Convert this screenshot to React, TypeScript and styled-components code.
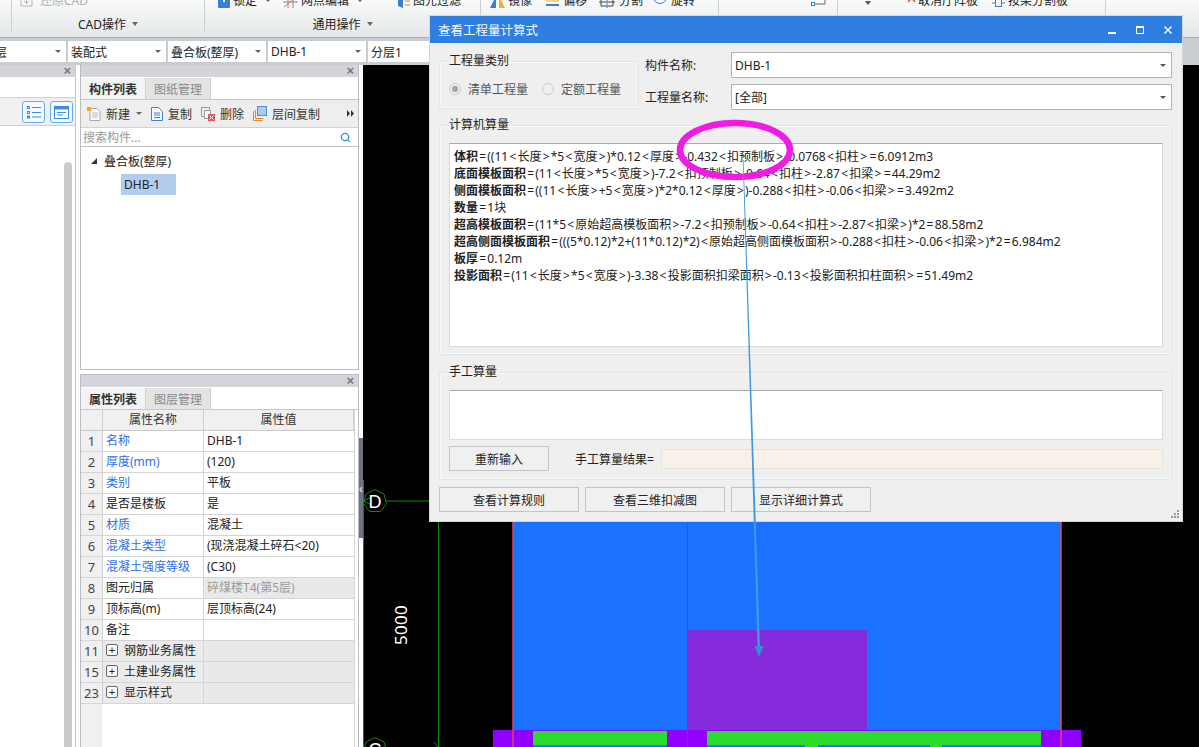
import React from 'react'
import styled, { createGlobalStyle } from 'styled-components'
import { Search } from 'lucide-react'

const FONT = '"Noto Sans", "Noto Sans CJK SC", sans-serif'

const GlobalStyle = createGlobalStyle`
  html, body {
    margin: 0;
    padding: 0;
    background: #fff;
    overflow: hidden;
  }
  * {
    box-sizing: border-box;
  }
`

const RIBBON_GROUPS = [
  { width: 12, items: [], label: '' },
  {
    width: 193,
    label: 'CAD操作',
    items: [{ ml: 8, icon: 'restore', text: '还原CAD', gap: 7, muted: true }],
  },
  {
    width: 276,
    label: '通用操作',
    items: [
      { ml: 13, icon: 'lock', text: '锁定', gap: 3, caret: true },
      { ml: 12, icon: 'axis', text: '网点编辑', gap: 3, caret: true },
      { ml: 35, icon: 'filter', text: '图元过滤', gap: 3 },
    ],
  },
  {
    width: 238,
    label: '',
    items: [
      { ml: 9, icon: 'mirror', text: '镜像', gap: 3 },
      { ml: 13, icon: 'offset', text: '偏移', gap: 3 },
      { ml: 12, icon: 'split', text: '分割', gap: 4 },
      { ml: 10, icon: 'rotate', text: '旋转', gap: 4 },
    ],
  },
  {
    width: 119,
    label: '',
    items: [{ ml: 92, icon: 'corner', text: '', gap: 0 }],
  },
  {
    width: 268,
    label: '',
    items: [
      { ml: 26, icon: 'caret', text: '', gap: 0 },
      { ml: 30, icon: 'cancel', text: '取消厅阵板', gap: 2 },
      { ml: 14, icon: 'beam', text: '按梁分割板', gap: 3 },
    ],
  },
]

const SELECTORS = [
  { width: 66, text: '层', clipped: true },
  { width: 98, text: '装配式' },
  { width: 98, text: '叠合板(整厚)' },
  { width: 98, text: 'DHB-1' },
  { width: 200, text: '分层1', noCaret: true },
]

type Prop = {
  no: number
  name: string
  value?: string
  link?: boolean
  muted?: boolean
  group?: boolean
}

const PROPS: Prop[] = [
  { no: 1, name: '名称', value: 'DHB-1', link: true },
  { no: 2, name: '厚度(mm)', value: '(120)', link: true },
  { no: 3, name: '类别', value: '平板', link: true },
  { no: 4, name: '是否是楼板', value: '是' },
  { no: 5, name: '材质', value: '混凝土', link: true },
  { no: 6, name: '混凝土类型', value: '(现浇混凝土碎石<20)', link: true },
  { no: 7, name: '混凝土强度等级', value: '(C30)', link: true },
  { no: 8, name: '图元归属', value: '碎煤楼T4(第5层)', muted: true },
  { no: 9, name: '顶标高(m)', value: '层顶标高(24)' },
  { no: 10, name: '备注', value: '' },
  { no: 11, name: '钢筋业务属性', group: true },
  { no: 15, name: '土建业务属性', group: true },
  { no: 23, name: '显示样式', group: true },
]

const FORMULAS = [
  ['体积', '=((11<长度>*5<宽度>)*0.12<厚度>-0.432<扣预制板>-0.0768<扣柱>=6.0912m3'],
  ['底面模板面积', '=(11<长度>*5<宽度>)-7.2<扣预制板>-0.64<扣柱>-2.87<扣梁>=44.29m2'],
  ['侧面模板面积', '=((11<长度>+5<宽度>)*2*0.12<厚度>)-0.288<扣柱>-0.06<扣梁>=3.492m2'],
  ['数量', '=1块'],
  ['超高模板面积', '=(11*5<原始超高模板面积>-7.2<扣预制板>-0.64<扣柱>-2.87<扣梁>)*2=88.58m2'],
  ['超高侧面模板面积', '=(((5*0.12)*2+(11*0.12)*2)<原始超高侧面模板面积>-0.288<扣柱>-0.06<扣梁>)*2=6.984m2'],
  ['板厚', '=0.12m'],
  ['投影面积', '=(11<长度>*5<宽度>)-3.38<投影面积扣梁面积>-0.13<投影面积扣柱面积>=51.49m2'],
]

const RibbonIcon = ({ name }: { name: string }) => {
  switch (name) {
    case 'restore':
      return (
        <svg width="13" height="14" viewBox="0 0 13 14" fill="none" stroke="#b5b5b5">
          <path d="M1 5v7h11V5M6.5 2v7M4 7l2.5 2.5L9 7" />
        </svg>
      )
    case 'lock':
      return (
        <svg width="12" height="14" viewBox="0 0 12 14">
          <rect x="0" y="0" width="12" height="14" rx="1" fill="#3a7fd0" />
          <rect x="5" y="3" width="2" height="5" fill="#fff" />
        </svg>
      )
    case 'axis':
      return (
        <svg width="15" height="14" viewBox="0 0 15 14" fill="none">
          <path d="M1 13L14 2M5 0v14M10 0v14" stroke="#c87a50" />
          <path d="M0 8h15" stroke="#7a8a9a" />
        </svg>
      )
    case 'filter':
      return (
        <svg width="12" height="14" viewBox="0 0 12 14">
          <path d="M0 2l5-2v14l-5-2z" fill="#3a7fd0" />
          <path d="M7 7h5M7 11h5" stroke="#e08030" />
        </svg>
      )
    case 'mirror':
      return (
        <svg width="15" height="14" viewBox="0 0 15 14">
          <path d="M0 14L6 2v12z" fill="#3a7fd0" />
          <path d="M15 14L9 2v12z" fill="#f0b030" />
        </svg>
      )
    case 'offset':
      return (
        <svg width="15" height="14" viewBox="0 0 15 14" fill="none">
          <rect x="1" y="-4" width="13" height="11" rx="2" stroke="#f0b030" />
          <path d="M1 11h13" stroke="#3a7fd0" strokeWidth="2" />
        </svg>
      )
    case 'split':
      return (
        <svg width="16" height="14" viewBox="0 0 16 14" fill="none" stroke="#444">
          <path d="M2 0v12h12V0M0 8h16" />
          <path d="M8 0v14" stroke="#3a7fd0" strokeDasharray="2 1" />
        </svg>
      )
    case 'rotate':
      return (
        <svg width="14" height="14" viewBox="0 0 14 14" fill="none">
          <circle cx="7" cy="3" r="6.5" stroke="#3a7fd0" />
        </svg>
      )
    case 'corner':
      return (
        <svg width="15" height="14" viewBox="0 0 15 14" fill="none">
          <path d="M14 0v10H3" stroke="#666" />
          <rect x="0.5" y="8.5" width="3" height="3" stroke="#3a7fd0" fill="#fff" />
        </svg>
      )
    case 'caret':
      return (
        <svg width="8" height="7" viewBox="0 0 8 7" fill="#555">
          <path d="M1 0h6L4 4z" />
        </svg>
      )
    case 'cancel':
      return (
        <svg width="14" height="14" viewBox="0 0 14 14" fill="none">
          <path d="M0 2h5M0 2v4" stroke="#3a7fd0" />
          <path d="M6 0l7 8M13 0L6 8" stroke="#e05a40" strokeWidth="1.6" />
        </svg>
      )
    case 'beam':
      return (
        <svg width="13" height="14" viewBox="0 0 13 14" fill="none">
          <rect x="3.5" y="0.5" width="6" height="12" stroke="#3a7fd0" />
          <path d="M0 3h3M0 9h3M10 3h3M10 9h3" stroke="#3a7fd0" />
        </svg>
      )
    default:
      return null
  }
}

const ToolIcon = ({ name }: { name: string }) => {
  switch (name) {
    case 'new':
      return (
        <svg width="14" height="14" viewBox="0 0 14 14" fill="none">
          <path d="M3 1.5h7l3 3v9H3z" fill="#fafafa" stroke="#a8a8a8" />
          <path d="M5 6h6M5 8h6M5 10h6" stroke="#bdbdbd" />
          <rect x="0" y="0" width="4" height="4" fill="#f5a623" />
        </svg>
      )
    case 'copy':
      return (
        <svg width="12" height="14" viewBox="0 0 12 14" fill="none">
          <path d="M0.5 0.5h7l4 4v9h-11z" fill="#f4f9ff" stroke="#3a86d8" />
          <path d="M3 6h6M3 8h6M3 10.5h6" stroke="#3a86d8" />
        </svg>
      )
    case 'delete':
      return (
        <svg width="14" height="14" viewBox="0 0 14 14" fill="none">
          <path d="M0.5 0.5h8v9h-8z" stroke="#9a9a9a" />
          <path d="M3.5 3.5h6v8h-6z" fill="#f6f6f6" stroke="#9a9a9a" />
          <rect x="7" y="7" width="7" height="7" fill="#e25555" />
          <path d="M8.5 8.5l4 4M12.5 8.5l-4 4" stroke="#fff" />
        </svg>
      )
    case 'floor':
      return (
        <svg width="14" height="15" viewBox="0 0 14 15" fill="none">
          <path d="M0.5 5v9.5h9M2.5 4v8.5h8" stroke="#e8832e" />
          <rect x="4.5" y="0.5" width="9" height="9" fill="#a9cdf2" stroke="#4a90d9" />
        </svg>
      )
    case 'list':
      return (
        <svg width="14" height="14" viewBox="0 0 14 14" fill="none" stroke="#3a8ee0">
          <rect x="0.5" y="1.5" width="2" height="2" />
          <rect x="0.5" y="6.5" width="2" height="2" />
          <rect x="0.5" y="11" width="2" height="2" />
          <path d="M5 2.5h9M5 7.5h9M5 12h9" />
        </svg>
      )
    case 'window':
      return (
        <svg width="15" height="13" viewBox="0 0 15 13">
          <rect x="0.5" y="0.5" width="14" height="12" fill="#fff" stroke="#3a8ee0" />
          <rect x="0.5" y="0.5" width="14" height="3" fill="#3a8ee0" />
          <path d="M3 6.5h9M3 9h6" stroke="#3a8ee0" />
        </svg>
      )
    default:
      return null
  }
}

const CanvasDrawing = () => (
  <svg width="836" height="682" viewBox="363 65 836 682">
    <rect x="513" y="500" width="548" height="247" fill="#1b72ff" />
    <rect x="687" y="630" width="180" height="100" fill="#852bdb" />
    <rect x="493" y="730" width="588" height="17" fill="#8f00ff" />
    <rect x="533" y="731" width="134" height="14" fill="#2bdc2b" />
    <rect x="707" y="731" width="334" height="14" fill="#2bdc2b" />
    <rect x="533" y="745" width="134" height="2" fill="#1b72ff" />
    <rect x="707" y="745" width="334" height="2" fill="#1b72ff" />
    <rect x="805" y="745" width="13" height="2" fill="#2bdc2b" />
    <rect x="930" y="745" width="12" height="2" fill="#2bdc2b" />
    <path d="M513 500v247M1061 500v247" stroke="#e0446a" strokeWidth="1.5" />
    <path d="M687.5 500v247" stroke="#f0142e" />
    <path d="M363.5 480v267M438.5 500v247M363 501h80" stroke="#0a8a0a" />
    <path d="M438 747l-4-5" stroke="#0a8a0a" />
    <polygon
      points="375,489.5 384,494 386.5,503.5 380.5,511.5 369.5,511.5 363.5,503.5 366,494"
      fill="#000"
      stroke="#0a8a0a"
    />
    <path d="M363.5 501l8 4M363.5 501l8-4" stroke="#0a8a0a" />
    <polygon points="375,737.5 384,742 386.5,751 363.5,751 366,742" fill="#000" stroke="#0a8a0a" />
    <Bubble x="375" y="508">D</Bubble>
    <Bubble x="375" y="756">C</Bubble>
    <Dim transform="translate(407 625) rotate(-90)" textAnchor="middle">
      5000
    </Dim>
  </svg>
)

// the source app's font gives < > = more room than Noto Sans does
const spaced = (text: string) =>
  text.split(/([<>=])/).map((part, i) => (i % 2 ? <Operator key={i}>{part}</Operator> : part))

const App = () => {
  return (
    <Page>
      <GlobalStyle />
      <Ribbon>
        {RIBBON_GROUPS.map((group, i) => (
          <RibbonGroup key={i} $width={group.width}>
            <RibbonRow>
              {group.items.map((item) => (
                <RibbonItem key={item.icon} $ml={item.ml} $gap={item.gap} $muted={item.muted}>
                  <RibbonIcon name={item.icon} />
                  {item.text}
                  {item.caret && <RibbonCaret />}
                </RibbonItem>
              ))}
            </RibbonRow>
            {group.label && (
              <RibbonLabel>
                {group.label}
                <LabelCaret />
              </RibbonLabel>
            )}
          </RibbonGroup>
        ))}
      </Ribbon>

      <SelectorBar>
        {SELECTORS.map((s) => (
          <SelectorCell key={s.text} $width={s.width} $clipped={s.clipped}>
            <span>{s.text}</span>
            {!s.noCaret && <SmallCaret />}
          </SelectorCell>
        ))}
      </SelectorBar>

      <Workspace>
        <LeftPanel>
          <PanelHeader>
            <CloseMark>×</CloseMark>
          </PanelHeader>
          <LeftTabs />
          <ViewButtons>
            <ViewButton>
              <ToolIcon name="list" />
            </ViewButton>
            <ViewButton>
              <ToolIcon name="window" />
            </ViewButton>
          </ViewButtons>
          <ScrollArea>
            <ScrollThumb />
          </ScrollArea>
        </LeftPanel>

        <MiddleColumn>
          <ListPanel>
            <PanelHeader>
              <CloseMark>×</CloseMark>
            </PanelHeader>
            <Tabs>
              <Tab $active>构件列表</Tab>
              <Tab>图纸管理</Tab>
            </Tabs>
            <Toolbar>
              <ToolButton $ml={6}>
                <ToolIcon name="new" />
                新建
                <ToolCaret />
              </ToolButton>
              <ToolButton $ml={9}>
                <ToolIcon name="copy" />
                复制
              </ToolButton>
              <ToolButton $ml={9}>
                <ToolIcon name="delete" />
                删除
              </ToolButton>
              <ToolButton $ml={9}>
                <ToolIcon name="floor" />
                层间复制
              </ToolButton>
              <MoreMark>
                <svg width="7" height="7" viewBox="0 0 7 7" fill="#333">
                  <path d="M0 0l3 3.5L0 7zM4 0l3 3.5L4 7z" />
                </svg>
              </MoreMark>
            </Toolbar>
            <SearchRow>
              搜索构件...
              <Search size={11} color="#3d93d2" strokeWidth={3} />
            </SearchRow>
            <TreeRoot>
              <svg width="6" height="6" viewBox="0 0 6 6" fill="#333">
                <path d="M6 0v6H0z" />
              </svg>
              叠合板(整厚)
            </TreeRoot>
            <TreeLeaf>DHB-1</TreeLeaf>
          </ListPanel>

          <PropertyPanel>
            <PanelHeader>
              <CloseMark>×</CloseMark>
            </PanelHeader>
            <Tabs>
              <Tab $active>属性列表</Tab>
              <Tab>图层管理</Tab>
            </Tabs>
            <PropTable>
              <HeadRow>
                <IndexCell />
                <HeadCell>属性名称</HeadCell>
                <HeadCell>属性值</HeadCell>
              </HeadRow>
              {PROPS.map((p) => (
                <PropRow key={p.no}>
                  <IndexCell>{p.no}</IndexCell>
                  <NameCell $link={p.link} $group={p.group}>
                    {p.group && <Expander>+</Expander>}
                    {p.name}
                  </NameCell>
                  <ValueCell $muted={p.muted} $group={p.group}>
                    {p.value}
                  </ValueCell>
                </PropRow>
              ))}
              <TableRest />
            </PropTable>
          </PropertyPanel>
        </MiddleColumn>

        <Splitter>
          <SplitterBar>‹</SplitterBar>
        </Splitter>

        <Canvas>
          <CanvasDrawing />
        </Canvas>
      </Workspace>

      <Dialog>
        <TitleBar>
          查看工程量计算式
          <WindowButtons>
            <svg width="10" height="10" viewBox="0 0 10 10" fill="none" stroke="#fff">
              <path d="M1 8h8" strokeWidth="2" />
            </svg>
            <svg width="10" height="10" viewBox="0 0 10 10" fill="none" stroke="#fff">
              <rect x="1.5" y="1.5" width="7" height="7" />
              <path d="M1 2h8" strokeWidth="2" />
            </svg>
            <svg width="10" height="10" viewBox="0 0 10 10" fill="none" stroke="#fff" strokeWidth="1.4">
              <path d="M1.5 1.5l7 7M8.5 1.5l-7 7" />
            </svg>
          </WindowButtons>
        </TitleBar>
        <DialogBody>
          <TopSection>
            <TypeGroup>
              <GroupTitle>工程量类别</GroupTitle>
              <RadioRow>
                <RadioItem>
                  <RadioMark $checked />
                  清单工程量
                </RadioItem>
                <RadioItem>
                  <RadioMark />
                  定额工程量
                </RadioItem>
              </RadioRow>
            </TypeGroup>
            <FieldColumn>
              <FieldRow>
                <FieldLabel>构件名称:</FieldLabel>
                <SelectBox>
                  DHB-1
                  <SelectCaret />
                </SelectBox>
              </FieldRow>
              <FieldRow>
                <FieldLabel>工程量名称:</FieldLabel>
                <SelectBox>
                  [全部]
                  <SelectCaret />
                </SelectBox>
              </FieldRow>
            </FieldColumn>
          </TopSection>

          <ComputedGroup>
            <GroupTitle>计算机算量</GroupTitle>
            <FormulaBox>
              {FORMULAS.map(([label, body]) => (
                <FormulaLine key={label}>
                  <b>{label}</b>
                  {spaced(body)}
                </FormulaLine>
              ))}
            </FormulaBox>
          </ComputedGroup>

          <ManualGroup>
            <GroupTitle>手工算量</GroupTitle>
            <ManualBox />
            <ManualRow>
              <DialogButton $width={100}>重新输入</DialogButton>
              <ResultLabel>手工算量结果=</ResultLabel>
              <ResultField />
            </ManualRow>
          </ManualGroup>

          <ButtonRow>
            <DialogButton $width={140}>查看计算规则</DialogButton>
            <DialogButton $width={140}>查看三维扣减图</DialogButton>
            <DialogButton $width={140}>显示详细计算式</DialogButton>
          </ButtonRow>
        </DialogBody>
        <ResizeGrip>
          <svg width="10" height="10" viewBox="0 0 10 10" fill="#999">
            <rect x="7" y="1" width="2" height="2" />
            <rect x="4" y="4" width="2" height="2" />
            <rect x="7" y="4" width="2" height="2" />
            <rect x="1" y="7" width="2" height="2" />
            <rect x="4" y="7" width="2" height="2" />
            <rect x="7" y="7" width="2" height="2" />
          </svg>
        </ResizeGrip>
      </Dialog>

      <Annotation width="1199" height="747" viewBox="0 0 1199 747">
        <ellipse cx="735" cy="150" rx="55" ry="27" fill="none" stroke="#f11be6" strokeWidth="6.5" />
        <polygon points="742.8,160 743.6,160 760,648 757.6,648" fill="#3d9be3" />
        <polygon points="754.5,646 763.5,646 759,657" fill="#2f8fdc" />
      </Annotation>
    </Page>
  )
}

export default App

const Page = styled.div`
  position: relative;
  display: flex;
  flex-direction: column;
  width: 1199px;
  height: 747px;
  overflow: hidden;
  font-family: ${FONT};
  font-size: 12px;
  color: #222;
  background: #c9ccd1;
`

const Ribbon = styled.div`
  display: flex;
  height: 38px;
  background: linear-gradient(#f9fafa, #e4e7e8);
  border-bottom: 1px solid #a9abae;
`

const RibbonGroup = styled.div<{ $width: number }>`
  flex: none;
  width: ${({ $width }) => $width}px;
  height: 33px;
  border-right: 1px solid #ccd0d3;
  overflow: hidden;
`

const RibbonRow = styled.div`
  display: flex;
  align-items: flex-end;
  height: 15px;
  margin-top: -7px;
`

const RibbonItem = styled.div<{ $ml: number; $gap: number; $muted?: boolean }>`
  display: flex;
  align-items: flex-end;
  gap: ${({ $gap }) => $gap}px;
  margin-left: ${({ $ml }) => $ml}px;
  line-height: 15px;
  color: ${({ $muted }) => ($muted ? '#b0b0b0' : '#222')};
  white-space: nowrap;
`

const RibbonLabel = styled.div`
  display: flex;
  align-items: center;
  justify-content: center;
  gap: 6px;
  height: 17px;
  margin-top: 7px;
`

const LabelCaret = styled.i`
  width: 0;
  height: 0;
  border-left: 3.5px solid transparent;
  border-right: 3.5px solid transparent;
  border-top: 4px solid #666;
`

const SmallCaret = styled.i`
  flex: none;
  width: 0;
  height: 0;
  border-left: 3px solid transparent;
  border-right: 3px solid transparent;
  border-top: 3px solid #666;
`

const RibbonCaret = styled(SmallCaret)`
  align-self: center;
  margin-left: 5px;
`

const SelectorBar = styled.div`
  display: flex;
  gap: 2px;
  height: 21px;
  margin-top: 3px;
`

const SelectorCell = styled.div<{ $width: number; $clipped?: boolean }>`
  display: flex;
  align-items: center;
  justify-content: space-between;
  flex: none;
  width: ${({ $width }) => $width}px;
  padding: 0 5px 0 ${({ $clipped }) => ($clipped ? 0 : 3)}px;
  background: #fff;
  overflow: hidden;
  span {
    margin-left: ${({ $clipped }) => ($clipped ? -5 : 0)}px;
  }
`

const Workspace = styled.div`
  display: flex;
  height: 682px;
  margin-top: 3px;
  background: #fff;
`

const LeftPanel = styled.div`
  display: flex;
  flex-direction: column;
  flex: none;
  width: 76px;
  border-right: 1px solid #c5c7ca;
`

const PanelHeader = styled.div`
  display: flex;
  align-items: center;
  justify-content: flex-end;
  flex: none;
  height: 12px;
  padding-right: 4px;
  background: #d3d5da;
`

const CloseMark = styled.span`
  font-family: 'Liberation Sans', sans-serif;
  font-size: 13px;
  font-weight: 700;
  line-height: 12px;
  color: #777;
`

const LeftTabs = styled.div`
  flex: none;
  height: 21px;
  border-bottom: 1px solid #cfd1d4;
`

const ViewButtons = styled.div`
  display: flex;
  justify-content: flex-end;
  gap: 5px;
  flex: none;
  height: 28px;
  padding: 3px 2px 0 0;
  background: #f0f0f0;
  border-bottom: 1px solid #d0d0d0;
`

const ViewButton = styled.div`
  display: flex;
  align-items: center;
  justify-content: center;
  width: 23px;
  height: 22px;
  background: #f6fbff;
  border: 1px solid #66adf0;
  border-radius: 3px;
`

const ScrollArea = styled.div`
  display: flex;
  flex: 1;
  padding: 36px 3px 0 64px;
`

const ScrollThumb = styled.div`
  width: 8px;
  background: #cbcbcb;
  border-radius: 4px 4px 0 0;
`

const MiddleColumn = styled.div`
  display: flex;
  flex-direction: column;
  gap: 4px;
  flex: none;
  width: 279px;
  margin-left: 4px;
`

const ListPanel = styled.div`
  display: flex;
  flex-direction: column;
  flex: none;
  height: 305px;
  border: solid #b9bcc2;
  border-width: 0 1px 1px;
`

const PropertyPanel = styled.div`
  display: flex;
  flex-direction: column;
  flex: 1;
  min-height: 0;
  border: solid #b9bcc2;
  border-width: 1px 1px 0;
`

const Tabs = styled.div`
  display: flex;
  flex: none;
  height: 23px;
  padding-top: 1px;
  border-bottom: 1px solid #c5c7ca;
`

const Tab = styled.div<{ $active?: boolean }>`
  display: flex;
  align-items: center;
  justify-content: center;
  width: 65px;
  font-weight: ${({ $active }) => ($active ? 700 : 400)};
  color: ${({ $active }) => ($active ? '#333' : '#8a8a8a')};
  background: ${({ $active }) => ($active ? '#f4f4f4' : '#e3e3e3')};
  border-right: 1px solid #cfd1d4;
`

const Toolbar = styled.div`
  display: flex;
  align-items: center;
  flex: none;
  height: 28px;
  background: #eeeeee;
  border-bottom: 1px solid #d0d2d6;
`

const ToolButton = styled.div<{ $ml: number }>`
  display: flex;
  align-items: center;
  gap: 5px;
  margin-left: ${({ $ml }) => $ml}px;
  color: #333;
`

const ToolCaret = styled(SmallCaret)`
  margin-left: 1px;
`

const MoreMark = styled.div`
  display: flex;
  margin-left: auto;
  padding-right: 4px;
`

const SearchRow = styled.div`
  display: flex;
  align-items: center;
  justify-content: space-between;
  flex: none;
  height: 19px;
  padding: 0 7px 0 2px;
  color: #9a9a9a;
  border-bottom: 1px solid #c0c3c9;
`

const TreeRoot = styled.div`
  display: flex;
  align-items: center;
  gap: 7px;
  height: 17px;
  margin-top: 5px;
  padding-left: 10px;
`

const TreeLeaf = styled.div`
  display: flex;
  align-items: center;
  width: 55px;
  height: 21px;
  margin: 5px 0 0 40px;
  padding-left: 3px;
  background: #b3cdee;
`

const PropTable = styled.div`
  display: flex;
  flex-direction: column;
  flex: 1;
  min-height: 0;
  margin-right: 3px;
  border-right: 1px solid #d5d5d5;
`

const HeadRow = styled.div`
  display: grid;
  grid-template-columns: 22px 101px 1fr;
  flex: none;
  height: 21px;
  background: #f0f0f0;
  border-bottom: 1px solid #c9c9c9;
`

const PropRow = styled.div`
  display: grid;
  grid-template-columns: 22px 101px 1fr;
  flex: none;
  height: 21px;
  border-bottom: 1px solid #d5d5d5;
`

const IndexCell = styled.div`
  display: flex;
  align-items: center;
  justify-content: center;
  padding-bottom: 1px;
  color: #444;
  font-size: 13px;
  background: #f0f0f0;
  border-right: 1px solid #cfcfcf;
`

const HeadCell = styled.div`
  display: flex;
  align-items: center;
  justify-content: center;
  padding-bottom: 2px;
  color: #333;
  border-right: 1px solid #cfcfcf;
`

const NameCell = styled.div<{ $link?: boolean; $group?: boolean }>`
  display: flex;
  align-items: center;
  gap: 6px;
  padding: 0 0 2px 3px;
  color: ${({ $link }) => ($link ? '#2f6fe8' : '#222')};
  background: ${({ $group }) => ($group ? '#ebebeb' : '#fff')};
  border-right: 1px solid #d5d5d5;
`

const ValueCell = styled.div<{ $muted?: boolean; $group?: boolean }>`
  display: flex;
  align-items: center;
  padding: 0 0 2px 3px;
  color: ${({ $muted }) => ($muted ? '#9a9a9a' : '#222')};
  background: ${({ $muted, $group }) => ($muted || $group ? '#e9e9e9' : '#fff')};
`

const Expander = styled.span`
  display: flex;
  align-items: center;
  justify-content: center;
  width: 12px;
  height: 12px;
  font-family: 'Liberation Sans', sans-serif;
  font-size: 11px;
  line-height: 1;
  background: #fafafa;
  border: 1px solid #666;
  border-radius: 2px;
`

const TableRest = styled.div`
  flex: 1;
  margin-right: 252px;
  background: linear-gradient(90deg, #f0f0f0 21px, #cfcfcf 21px, #cfcfcf 22px, #fff 22px);
`

const Splitter = styled.div`
  flex: none;
  width: 4px;
  padding-top: 373px;
  background: #fff;
`

const SplitterBar = styled.div`
  display: flex;
  align-items: center;
  justify-content: center;
  height: 100px;
  font-size: 12px;
  font-weight: 700;
  color: #c8ccd2;
  background: #6b7480;
`

const Canvas = styled.div`
  flex: 1;
  min-width: 0;
  background: #000;
  svg {
    display: block;
  }
`

const Bubble = styled.text`
  font-family: 'Liberation Sans', sans-serif;
  font-size: 18px;
  fill: #fff;
  text-anchor: middle;
`

const Dim = styled.text`
  font-family: ${FONT};
  font-size: 17px;
  letter-spacing: 0.3px;
  fill: #fff;
`

const Dialog = styled.div`
  position: absolute;
  top: 16px;
  left: 430px;
  display: flex;
  flex-direction: column;
  width: 752px;
  height: 505px;
  background: #efefef;
  box-shadow: 0 0 0 1px #d4d6da;
`

const TitleBar = styled.div`
  display: flex;
  align-items: center;
  justify-content: space-between;
  flex: none;
  height: 27px;
  padding: 0 9px 0 8px;
  font-size: 12.5px;
  color: #f3f8ff;
  background: #2e7fe0;
`

const WindowButtons = styled.div`
  display: flex;
  gap: 18px;
`

const DialogBody = styled.div`
  display: flex;
  flex-direction: column;
  flex: 1;
  padding: 9px 10px 0 9px;
`

const TopSection = styled.div`
  display: flex;
  flex: none;
`

const GroupBase = styled.fieldset`
  flex: none;
  min-width: 0;
  margin: 0;
  border: 1px solid #e4e4e4;
  box-shadow: inset 0 0 0 1px #f8f8f8;
`

const GroupTitle = styled.legend`
  padding: 0;
  line-height: 16px;
  color: #222;
`

const TypeGroup = styled(GroupBase)`
  width: 199px;
  height: 56px;
  margin-top: 1px;
  padding: 0 9px;
`

const RadioRow = styled.div`
  display: flex;
  gap: 14px;
  margin-top: 11px;
  color: #555;
`

const RadioItem = styled.div`
  display: flex;
  align-items: center;
  gap: 7px;
`

const RadioMark = styled.i<{ $checked?: boolean }>`
  flex: none;
  width: 12px;
  height: 12px;
  border: 1px solid #c9c9c9;
  border-radius: 50%;
  background: ${({ $checked }) =>
    $checked ? 'radial-gradient(circle, #a8a8a8 0 3px, #efefef 3.5px)' : '#efefef'};
`

const FieldColumn = styled.div`
  display: flex;
  flex-direction: column;
  gap: 6px;
  flex: 1;
  margin-left: 7px;
`

const FieldRow = styled.div`
  display: flex;
  align-items: center;
  height: 26px;
`

const FieldLabel = styled.div`
  flex: none;
  width: 86px;
`

const SelectBox = styled.div`
  display: flex;
  align-items: center;
  justify-content: space-between;
  flex: 1;
  height: 26px;
  padding: 0 5px 0 3px;
  background: #fff;
  border: 1px solid #b4b4b4;
`

const SelectCaret = styled(SmallCaret)`
  border-top-color: #555;
`

const ComputedGroup = styled(GroupBase)`
  height: 238px;
  margin-top: 7px;
  padding: 10px 8px 7px 9px;
`

const FormulaBox = styled.div`
  height: 204px;
  padding: 4px 4px;
  background: #fff;
  border: 1px solid #d8d8d8;
  border-top-color: #a9a9b0;
  line-height: 17px;
`

const FormulaLine = styled.div`
  white-space: nowrap;
  b {
    font-weight: 700;
  }
`

const Operator = styled.span`
  margin: 0 1.2px;
`

const ManualGroup = styled(GroupBase)`
  height: 116px;
  margin-top: 9px;
  padding: 10px 8px 0 9px;
`

const ManualBox = styled.div`
  height: 50px;
  background: #fff;
  border: 1px solid #dcdcdc;
  border-top-color: #a9a9b0;
`

const ManualRow = styled.div`
  display: flex;
  align-items: center;
  margin-top: 6px;
`

const DialogButton = styled.div<{ $width: number }>`
  display: flex;
  align-items: center;
  justify-content: center;
  flex: none;
  width: ${({ $width }) => $width}px;
  height: 25px;
  background: #f0f0f0;
  border: 1px solid #c4c4c4;
`

const ResultLabel = styled.div`
  flex: none;
  margin-left: 26px;
  width: 86px;
`

const ResultField = styled.div`
  flex: 1;
  height: 20px;
  background: #f9f0e7;
  border: 1px solid #e6e3dd;
`

const ButtonRow = styled.div`
  display: flex;
  gap: 6px;
  flex: none;
  margin-top: 7px;
`

const ResizeGrip = styled.div`
  position: absolute;
  right: 2px;
  bottom: 2px;
  display: flex;
`

const Annotation = styled.svg`
  position: absolute;
  top: 0;
  left: 0;
  pointer-events: none;
`
